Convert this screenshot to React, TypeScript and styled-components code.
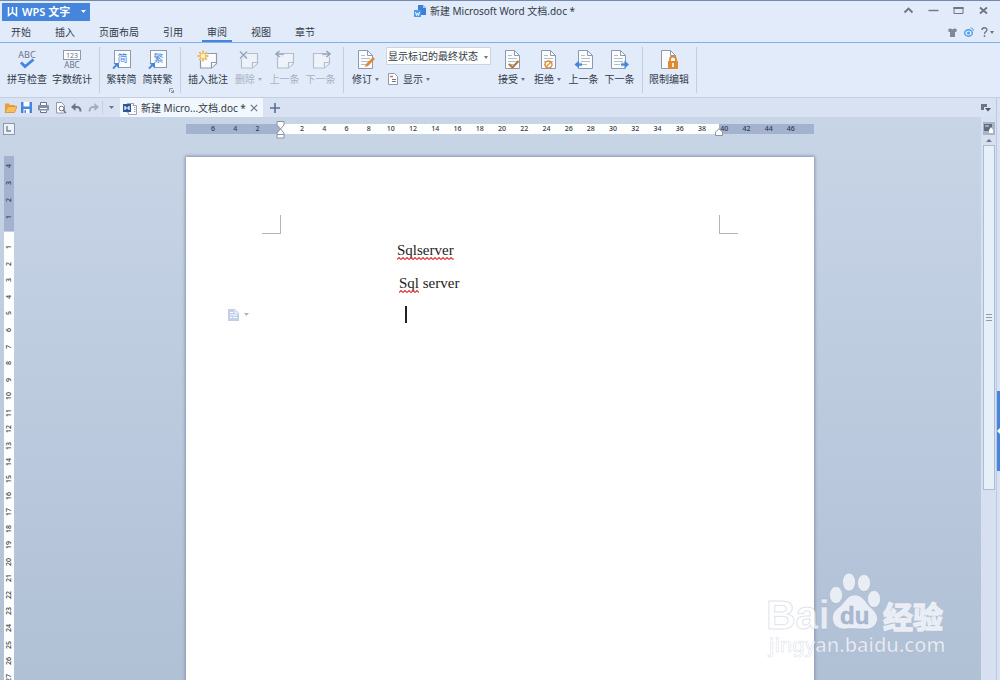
import React from 'react';
import styled, { createGlobalStyle, css } from 'styled-components';

const c = {
  text: '#333a48',
  muted: '#a8b1c1',
  icon: '#6b7488',
  iconSoft: '#8f99ad',
  blue: '#4586dc',
  orange: '#dd8a35',
  chrome: '#e1ebfa',
  bar: '#d8e2f2',
  line: '#c3cfe1',
  rulerDark: '#a3b3cf',
};

const GlobalStyle = createGlobalStyle`
  * { box-sizing: border-box; }
  body {
    margin: 0;
    color: ${c.text};
    font: 10px/12px "Noto Sans", "Noto Sans CJK SC", sans-serif;
  }
  button, select {
    margin: 0;
    padding: 0;
    border: 0;
    background: none;
    color: inherit;
    font: inherit;
  }
  svg { display: block; flex: none; }
`;

const Shell = styled.div`
  display: flex;
  flex-direction: column;
  height: 100vh;
  overflow: hidden;
  background: ${c.chrome};
  border-top: 1px solid #7589ae;
`;

/* ---------- title bar ---------- */

const TitleBar = styled.header`
  display: grid;
  grid-template-columns: 1fr auto 1fr;
  align-items: center;
  height: 21px;
  padding: 0 10px 0 2px;
`;

const AppButton = styled.button`
  display: flex;
  align-items: center;
  gap: 4px;
  justify-self: start;
  width: 88px;
  height: 18px;
  padding: 0 4px 0 5px;
  background: ${c.blue};
  color: #fff;
  font-size: 11px;
  font-weight: 600;
  line-height: 18px;
  svg:last-child { margin-left: auto; }
`;

const DocTitle = styled.h1`
  display: flex;
  align-items: center;
  gap: 4px;
  margin: 0;
  padding: 0 3px 2px 0;
  font-size: 10px;
  font-weight: 400;
`;

const WindowButtons = styled.div`
  display: flex;
  justify-content: flex-end;
  gap: 12px;
  padding-bottom: 2px;
`;

const IconButton = styled.button`
  display: flex;
  align-items: center;
  justify-content: center;
  gap: 2px;
`;

/* ---------- menu ---------- */

const MenuBar = styled.nav`
  display: flex;
  justify-content: space-between;
  height: 21px;
  padding: 0 6px;
  border-bottom: 1px solid #7fb0ea;
`;

const MenuTabs = styled.div`
  display: flex;
  gap: 14px;
`;

const MenuTab = styled.button<{ $active?: boolean }>`
  padding: 2px 5px 0;
  border-bottom: 2px solid ${(p) => (p.$active ? c.blue : 'transparent')};
`;

const MenuTools = styled.div`
  display: flex;
  align-items: center;
  gap: 7px;
`;

/* ---------- ribbon ---------- */

const Ribbon = styled.div`
  display: flex;
  flex: none;
  height: 55px;
  padding: 4px 1px;
  border-bottom: 1px solid ${c.line};
`;

const Group = styled.div<{ $start?: number }>`
  position: relative;
  display: flex;
  gap: 5px;
  padding: 0 7px 0 ${(p) => p.$start ?? 6}px;
  border-right: 1px solid ${c.line};
`;

const Tool = styled.button<{ $wide?: boolean }>`
  display: flex;
  flex-direction: column;
  align-items: center;
  gap: 3px;
  width: ${(p) => (p.$wide ? 40 : 31)}px;
  padding-top: 3px;
  white-space: nowrap;
  &:disabled { color: ${c.muted}; }
`;

const ToolLabel = styled.span`
  display: flex;
  align-items: center;
  gap: 3px;
`;

const Stack = styled.div`
  display: flex;
  flex-direction: column;
  align-items: flex-start;
  gap: 8px;
`;

const Combo = styled.label`
  position: relative;
  display: block;
  width: 105px;
  height: 18px;
  border: 1px solid #ccd4de;
  background: #fdfefe;
  svg {
    position: absolute;
    right: 2px;
    top: 8px;
    pointer-events: none;
  }
`;

const ComboSelect = styled.select`
  display: block;
  appearance: none;
  width: 100%;
  height: 100%;
  padding: 0 1px 1px;
  line-height: 14px;
`;

const InlineTool = styled.button`
  display: flex;
  align-items: center;
  gap: 5px;
  padding-left: 2px;
`;

const Launcher = styled.button`
  position: absolute;
  right: 6px;
  bottom: 0;
`;

/* ---------- document tabs ---------- */

const Lower = styled.div`
  display: flex;
  flex: 1;
  min-height: 0;
`;

const Main = styled.div`
  display: flex;
  flex: 1;
  flex-direction: column;
  min-width: 0;
`;

const TabBar = styled.div`
  display: flex;
  flex: none;
  align-items: center;
  height: 19px;
  padding-left: 2px;
  background: ${c.bar};
`;

const QuickTools = styled.div`
  display: grid;
  grid-template-columns: repeat(6, 1fr);
  width: 101px;
  border-right: 1px solid ${c.line};
`;

const MoreButton = styled(IconButton)`
  width: 17px;
`;

const DocTab = styled.div`
  display: flex;
  align-items: center;
  gap: 4px;
  height: 100%;
  width: 143px;
  padding: 1px 5px 0 3px;
  background: #f1f7fc;
  white-space: nowrap;
  span { flex: 1; }
`;

const TabEnd = styled.div`
  display: flex;
  flex: 1;
  justify-content: space-between;
  padding: 0 5px 0 7px;
`;

/* ---------- workspace ---------- */

const Workspace = styled.div`
  display: flex;
  flex: 1;
  min-height: 0;
  background: linear-gradient(#c8d5e7, #b0c0d5);
`;

const Canvas = styled.main`
  display: grid;
  flex: 1;
  grid-template-columns: 19px 1fr;
  grid-template-rows: 39px 1fr;
  min-width: 0;
  overflow: hidden;
`;

const TabStop = styled.button`
  display: grid;
  place-items: center;
  width: 12px;
  height: 12px;
  margin: 6px 0 0 3px;
  border: 1px solid #8d99ae;
  background: #eef2f7;
`;

const Ruler = styled.div`
  position: relative;
  display: grid;
  grid-template-columns: repeat(27, 1fr);
  justify-self: center;
  width: 628px;
  height: 10px;
  margin-top: 7px;
  padding: 0 12px 0 16px;
  background: linear-gradient(
    90deg,
    ${c.rulerDark} 94px,
    #fdfefe 94px calc(100% - 95px),
    ${c.rulerDark} calc(100% - 95px)
  );
  font-size: 7px;
  font-weight: 500;
  line-height: 10px;
  text-align: center;
`;

const Marker = styled.svg<{ $at: number; $top: number }>`
  position: absolute;
  left: ${(p) => p.$at}px;
  top: ${(p) => p.$top}px;
`;

const SideRuler = styled.div`
  width: 10px;
  margin-left: 4px;
  font-size: 7px;
  font-weight: 500;
  line-height: 10px;
`;

const SideScale = styled.div<{ $dark?: boolean }>`
  display: grid;
  grid-auto-rows: 1fr;
  place-items: center;
  ${(p) =>
    p.$dark
      ? css`
          height: 75px;
          padding: 2px 0 6px;
          margin-bottom: 1px;
          background: ${c.rulerDark};
        `
      : css`
          height: 454px;
          padding-top: 7px;
          background: #fdfefe;
        `}
`;

const SideNumber = styled.span`
  writing-mode: vertical-rl;
  transform: rotate(180deg);
`;

const Page = styled.article`
  justify-self: center;
  width: 628px;
  min-height: 888px;
  margin-top: 1px;
  padding-top: 58px;
  background: #fff;
  box-shadow: 0 0 3px 1px #8794ab;
  color: #1c1c1c;
  font: 15px/33px "Liberation Serif", "Noto Sans CJK SC", serif;
`;

const CropMarks = styled.div`
  display: flex;
  justify-content: space-between;
  padding: 0 76px;
`;

const Crop = styled.i<{ $side: 'left' | 'right' }>`
  width: 19px;
  height: 19px;
  border-bottom: 1px solid #b5b5b5;
  border-${(p) => (p.$side === 'left' ? 'right' : 'left')}: 1px solid #b5b5b5;
`;

const Line = styled.p<{ $indent: number }>`
  display: flex;
  align-items: center;
  height: 33px;
  margin: 0;
  padding-left: ${(p) => p.$indent}px;
  white-space: pre;
`;

const CaretLine = styled.div`
  display: flex;
  align-items: center;
  height: 29px;
  padding-left: 42px;
`;

const Misspelt = styled.span`
  position: relative;
  svg {
    position: absolute;
    left: 0;
    bottom: 7px;
    width: 100%;
    height: 3px;
  }
`;

const PasteOptions = styled(IconButton)`
  gap: 5px;
  width: 21px;
`;

const Caret = styled.i`
  width: 2px;
  height: 17px;
  margin-left: 156px;
  background: #222;
`;

/* ---------- scroll bar and edge ---------- */

const ScrollBar = styled.aside`
  display: flex;
  flex-direction: column;
  align-items: center;
  width: 15px;
  padding-top: 5px;
  background: #d6e0f1;
`;

const Browse = styled.button`
  display: grid;
  place-items: center;
  width: 12px;
  height: 13px;
  background: #a9b4c7;
`;

const ScrollUp = styled.button`
  display: grid;
  place-items: center;
  width: 12px;
  height: 10px;
`;

const Thumb = styled.div`
  display: grid;
  place-items: center;
  width: 12px;
  height: 345px;
  border: 1px solid #aebbd0;
  background: #e6f0f8;
`;

const Edge = styled.aside`
  width: 4px;
  padding-top: 293px;
  border-left: 1px solid #bccae0;
  background: ${c.bar};
`;

const EdgeHandle = styled.button`
  display: grid;
  place-items: center;
  width: 3px;
  height: 80px;
  background: ${c.blue};
`;

const Watermark = styled.svg`
  position: absolute;
  right: 48px;
  bottom: 20px;
  pointer-events: none;
`;

/* ---------- icons ---------- */

const Down = ({ color = c.icon, size = 5 }: { color?: string; size?: number }) => (
  <svg width={size} height="3" viewBox="0 0 6 3" preserveAspectRatio="none"><path d="M0 0h6L3 3z" fill={color} /></svg>
);

const Big = ({ children }: { children: React.ReactNode }) => (
  <svg width="22" height="20" viewBox="0 0 22 20" fill="none" overflow="visible" aria-hidden="true">{children}</svg>
);

const glyph = { fontFamily: '"Noto Sans","Noto Sans CJK SC",sans-serif', textAnchor: 'middle' as const };

const SpellIcon = () => (
  <Big>
    <text x="11" y="8" fontSize="9" fill={c.icon} {...glyph}>ABC</text>
    <path d="M5 12.500l4 4L17.500 9.500" stroke={c.blue} strokeWidth="2.800" />
  </Big>
);
const CountIcon = () => (
  <Big>
    <rect x="2.5" y="0.5" width="17" height="9" fill="#fff" stroke={c.iconSoft} />
    <text x="11" y="8" fontSize="7" fill={c.icon} {...glyph}>123</text>
    <text x="11" y="18" fontSize="8" fill={c.icon} {...glyph}>ABC</text>
  </Big>
);
const ConvertIcon = ({ char }: { char: string }) => (
  <Big>
    <rect x="3.5" y="0.5" width="16" height="17" fill="#fafcff" stroke={c.iconSoft} />
    <text x="11.5" y="12" fontSize="10" fill={c.blue} {...glyph}>{char}</text>
    <path d="M1 13h6v7H1z" fill={c.chrome} />
    <path d="M2 18.500L6 14.500" stroke={c.blue} strokeWidth="1.800" />
    <path d="M2.500 13H8v5.500z" fill={c.blue} />
  </Big>
);
const NoteShape = ({ faded }: { faded?: boolean }) => (
  <g stroke={faded ? '#b4bdcc' : c.iconSoft} strokeWidth="1.2">
    <path d="M3.500 3.500h16v10l-5 4.500h-11z" fill={faded ? '#eef3fa' : '#fbfcfe'} />
    <path d="M19.500 12.500h-5V18" fill={faded ? '#eef3fa' : '#fff'} />
  </g>
);
const AddNoteIcon = () => (
  <Big>
    <NoteShape />
    <circle cx="6" cy="6" r="5" fill={c.chrome} />
    <path d="M6 .5v11M.5 6h11M2.200 2.200l7.600 7.600M9.800 2.200L2.200 9.800" stroke="#f2b02e" strokeWidth="1.400" />
    <circle cx="6" cy="6" r="2.200" fill="#fff3c4" />
  </Big>
);
const DeleteNoteIcon = () => (
  <Big>
    <NoteShape faded />
    <path d="M1 1h8v8H1z" fill={c.chrome} />
    <path d="M2 1.500l7 7M9 1.500l-7 7" stroke="#98a3b6" strokeWidth="1.400" />
  </Big>
);
const StepNoteIcon = ({ next }: { next?: boolean }) => (
  <Big>
    <NoteShape faded />
    <path d={next ? 'M12 1h9v6h-9z' : 'M1 1h9v6H1z'} fill={c.chrome} />
    {next ? (
      <path d="M12 4h7M16.500 1L20 4l-3.500 3" stroke="#98a3b6" strokeWidth="1.600" />
    ) : (
      <path d="M10 4H3M5.500 1L2 4l3.500 3" stroke="#98a3b6" strokeWidth="1.600" />
    )}
  </Big>
);
const Sheet = ({ x = 4 }: { x?: number }) => (
  <g transform={`translate(${x} 0)`} stroke={c.iconSoft}>
    <path d="M.5.5h9l5 5v13H.5z" fill="#fbfcfe" />
    <path d="M9.500.5v5h5" />
  </g>
);
const SheetLines = ({ x = 4 }: { x?: number }) => (
  <path transform={`translate(${x} 0)`} d="M3 5.500h4M3 8.500h9M3 11.500h9M3 14.500h6" stroke="#b5bdcb" />
);
const ReviseIcon = () => (
  <Big>
    <Sheet x={3} /><SheetLines x={3} />
    <path d="M10 17l1-3 7-7 2 2-7 7z" fill={c.orange} />
  </Big>
);
const AcceptIcon = () => (
  <Big><Sheet /><SheetLines /><path d="M8 14l3.500 3.500L17.500 11" stroke="#b4783a" strokeWidth="2" /></Big>
);
const RejectIcon = () => (
  <Big>
    <Sheet /><SheetLines />
    <circle cx="11.500" cy="14.500" r="3.500" fill="#fff" stroke={c.orange} strokeWidth="1.400" />
    <path d="M9 17l5-5" stroke={c.orange} strokeWidth="1.200" />
  </Big>
);
const StepIcon = ({ next }: { next?: boolean }) => (
  <Big>
    <Sheet x={next ? 2 : 5} /><SheetLines x={next ? 2 : 5} />
    {next ? (
      <>
        <path d="M12 12h8v5h-8z" fill={c.chrome} />
        <path d="M12 14.500h5" stroke={c.blue} strokeWidth="2.200" />
        <path d="M15.500 10.500l4.500 4-4.500 4z" fill={c.blue} />
      </>
    ) : (
      <>
        <path d="M2 12h7v5H2z" fill={c.chrome} />
        <path d="M9 14.500H4" stroke={c.blue} strokeWidth="2.200" />
        <path d="M6 10.500l-4.500 4 4.500 4z" fill={c.blue} />
      </>
    )}
  </Big>
);
const LockIcon = () => (
  <Big>
    <Sheet x={3} />
    <path d="M12 11V9.500a3 3 0 0 1 6 0V11" stroke={c.orange} strokeWidth="1.800" />
    <rect x="10" y="11" width="10" height="8" fill={c.orange} />
    <path d="M15 13v4" stroke="#fff" strokeWidth="1.600" />
  </Big>
);

const Q = ({ children }: { children: React.ReactNode }) => (
  <svg width="13" height="13" viewBox="0 0 13 13" fill="none" aria-hidden="true">{children}</svg>
);

const WordIcon = () => (
  <svg width="14" height="13" viewBox="0 0 14 13" fill="none" aria-hidden="true">
    <rect x="4.500" y="1.500" width="6" height="9" fill="#fff" stroke="#9aa5b8" />
    <path d="M9.500 3.500h4v9h-8v-2" fill="#fff" stroke="#9aa5b8" />
    <path d="M11 5.500h1.500M11 7.500h1.500M11 9.500h1.500" stroke="#9aa5b8" />
    <rect y="2" width="8" height="8" fill="#2b579a" />
    <path d="M2 4v4M6 4v4M2 6h4" stroke="#fff" strokeWidth="1.200" />
  </svg>
);

const quick = [
  { label: '打开', art: <><path d="M1 11V2.500h4l1 1.500h5v2" fill="#e8a03a" /><path d="M1 11.500L3.500 5.500H13L10.500 11.500z" fill="#f6c062" stroke="#d98f2c" strokeWidth=".8" /></> },
  { label: '保存', art: <><path d="M1 1h11v11H1z" fill={c.blue} /><path d="M3.500 1h6v4.500h-6zM3.500 8h6v4h-6z" fill="#fff" /><path d="M4.500 9h1.500v3H4.500z" fill={c.blue} /></> },
  { label: '打印', art: <><path d="M3.500 4V1.500h6V4M3.500 9.500v2h6v-2" stroke={c.icon} fill="#fff" /><rect x="1" y="4" width="11" height="5.500" rx="1" fill="#858fa3" /><path d="M3 7.500h7" stroke="#fff" /></> },
  { label: '打印预览', art: <><path d="M2.500 1.500h5l3 3v7.500h-8z" fill="#fff" stroke={c.iconSoft} /><circle cx="7.500" cy="7.500" r="2.400" fill="#fff" stroke={c.icon} /><path d="M9.300 9.300L12 12" stroke={c.icon} strokeWidth="1.400" /></> },
  { label: '撤销', art: <><path d="M1 6l4.500-4v8z" fill={c.icon} /><path d="M5 6c4-.5 5.500 1 5.500 4.500" stroke={c.icon} strokeWidth="2" /></> },
  { label: '恢复', art: <><path d="M12 6L7.500 2v8z" fill="#a4adbd" /><path d="M8 6c-4-.5-5.500 1-5.500 4.500" stroke="#a4adbd" strokeWidth="2" /></> },
];

const ruler = [6, 4, 2, null, ...Array.from({ length: 23 }, (_, i) => (i + 1) * 2)];

const Wave = ({ id }: { id: string }) => (
  <svg aria-hidden="true">
    <pattern id={id} width="4" height="3" patternUnits="userSpaceOnUse">
      <path d="M0 2.500L2 .5l2 2" fill="none" stroke="#e83030" strokeWidth="1.100" />
    </pattern>
    <rect width="100%" height="3" fill={`url(#${id})`} />
  </svg>
);

export default function App() {
  return (
    <Shell>
      <GlobalStyle />
      <TitleBar>
        <AppButton>
          <svg width="11" height="11" viewBox="0 0 11 11" fill="none" aria-hidden="true">
            <path d="M1.500 1v8.500L5.500 6.500M5.500 1v5.500L9.500 9.500V1" stroke="#fff" strokeWidth="1.500" />
          </svg>
          WPS 文字
          <Down color="#fff" />
        </AppButton>
        <DocTitle>
          <svg width="12" height="12" viewBox="0 0 12 12" aria-hidden="true">
            <path d="M4 0h5l3 3v7H4z" fill="#3f7fd8" />
            <path d="M9 0v3h3z" fill="#a8cbf5" />
            <rect y="5" width="7" height="7" fill="#4e9bec" />
            <path d="M1.500 7l1 3.500L3.500 8l1 2.500 1-3.500" stroke="#fff" fill="none" strokeWidth=".9" />
          </svg>
          新建 Microsoft Word 文档.doc *
        </DocTitle>
        <WindowButtons>
          <IconButton aria-label="折叠功能区"><Q><path d="M2.500 8.500l4-4 4 4" stroke={c.icon} strokeWidth="1.800" /></Q></IconButton>
          <IconButton aria-label="最小化"><Q><path d="M1.500 6.500h10" stroke={c.icon} strokeWidth="1.400" /></Q></IconButton>
          <IconButton aria-label="最大化"><Q><path d="M2 3.500h9v6H2z" stroke={c.icon} /><path d="M1.500 4h10" stroke={c.icon} strokeWidth="2" /></Q></IconButton>
          <IconButton aria-label="关闭"><Q><path d="M3 3.500l7 6M10 3.500l-7 6" stroke={c.icon} strokeWidth="1.800" /></Q></IconButton>
        </WindowButtons>
      </TitleBar>

      <MenuBar>
        <MenuTabs>
          {['开始', '插入', '页面布局', '引用', '审阅', '视图', '章节'].map((name) => (
            <MenuTab key={name} $active={name === '审阅'}>{name}</MenuTab>
          ))}
        </MenuTabs>
        <MenuTools>
          <IconButton aria-label="皮肤">
            <svg width="9" height="9" viewBox="0 0 9 9"><path d="M0 1.500L2.500.3Q4.500 2 6.500.3L9 1.500 8.200 4H7v5H2V4H.8z" fill="#80899c" /></svg>
          </IconButton>
          <IconButton aria-label="微博">
            <svg width="10" height="10" viewBox="0 0 10 10" fill="none">
              <ellipse cx="4.500" cy="6" rx="3.800" ry="3.200" stroke="#4b9be8" strokeWidth="1.400" />
              <circle cx="4.500" cy="6" r="1.500" fill="#4b9be8" />
              <path d="M6.500 1c2 0 3 1 2.800 2.800" stroke="#4b9be8" />
            </svg>
          </IconButton>
          <IconButton aria-label="帮助">
            <svg width="7" height="10" viewBox="0 0 7 10" fill="none">
              <path d="M1 3C1 0 6 0 6 2.800 6 4.500 3.500 4.500 3.500 7" stroke={c.icon} strokeWidth="1.400" />
              <circle cx="3.500" cy="9" r=".9" fill={c.icon} />
            </svg>
            <Down size={4} />
          </IconButton>
        </MenuTools>
      </MenuBar>

      <Ribbon>
        <Group>
          <Tool $wide><SpellIcon />拼写检查</Tool>
          <Tool $wide><CountIcon />字数统计</Tool>
        </Group>
        <Group>
          <Tool><ConvertIcon char="简" />繁转简</Tool>
          <Tool><ConvertIcon char="繁" />简转繁</Tool>
          <Launcher aria-label="中文简繁转换设置">
            <svg width="5" height="5" viewBox="0 0 5 5" fill="none"><path d="M.5 4V.5H4M2 2l2.500 2.500M4.500 2v2.500H2" stroke="#8b95a8" /></svg>
          </Launcher>
        </Group>
        <Group $start={7}>
          <Tool $wide><AddNoteIcon />插入批注</Tool>
          <Tool disabled><DeleteNoteIcon /><ToolLabel>删除<Down color={c.muted} size={4} /></ToolLabel></Tool>
          <Tool disabled><StepNoteIcon />上一条</Tool>
          <Tool disabled><StepNoteIcon next />下一条</Tool>
        </Group>
        <Group>
          <Tool><ReviseIcon /><ToolLabel>修订<Down size={4} /></ToolLabel></Tool>
          <Stack>
            <Combo aria-label="显示状态">
              <ComboSelect defaultValue="final">
                <option value="final">显示标记的最终状态</option>
                <option value="final-clean">最终状态</option>
              </ComboSelect>
              <Down size={4} />
            </Combo>
            <InlineTool>
              <svg width="10" height="12" viewBox="0 0 10 12" fill="none" aria-hidden="true">
                <path d="M.5.5h6l3 3v8h-9z" fill="#fff" stroke={c.iconSoft} />
                <path d="M2 3.500h3" stroke="#e06650" strokeWidth="1.400" />
                <path d="M4 6.500h4M4 8.500h4" stroke={c.icon} />
              </svg>
              <ToolLabel>显示<Down size={4} /></ToolLabel>
            </InlineTool>
          </Stack>
          <Tool><AcceptIcon /><ToolLabel>接受<Down size={4} /></ToolLabel></Tool>
          <Tool><RejectIcon /><ToolLabel>拒绝<Down size={4} /></ToolLabel></Tool>
          <Tool><StepIcon />上一条</Tool>
          <Tool><StepIcon next />下一条</Tool>
        </Group>
        <Group>
          <Tool $wide><LockIcon />限制编辑</Tool>
        </Group>
      </Ribbon>

      <Lower>
        <Main>
          <TabBar>
            <QuickTools>
              {quick.map((q) => (
                <IconButton key={q.label} aria-label={q.label}><Q>{q.art}</Q></IconButton>
              ))}
            </QuickTools>
            <MoreButton aria-label="自定义快速访问"><Down /></MoreButton>
            <DocTab>
              <WordIcon />
              <span>新建 Micro...文档.doc *</span>
              <IconButton aria-label="关闭文档">
                <svg width="8" height="8" viewBox="0 0 8 8"><path d="M.8.8l6.400 6.400M7.200.8L.8 7.200" stroke={c.icon} strokeWidth="1.200" /></svg>
              </IconButton>
            </DocTab>
            <TabEnd>
              <IconButton aria-label="新建文档">
                <svg width="10" height="10" viewBox="0 0 10 10"><path d="M5 0v10M0 5h10" stroke="#5b6f95" strokeWidth="1.600" /></svg>
              </IconButton>
              <IconButton aria-label="文档列表">
                <svg width="11" height="9" viewBox="0 0 11 9"><path d="M1 1h6v3H4v3H1z" fill={c.icon} /><path d="M5 5h6L8 8.500z" fill="#4d566a" /></svg>
              </IconButton>
            </TabEnd>
          </TabBar>

          <Workspace>
            <Canvas>
              <TabStop aria-label="制表位">
                <svg width="6" height="6" viewBox="0 0 6 6" fill="none"><path d="M1 0v5h4" stroke="#7d879a" strokeWidth="1.400" /></svg>
              </TabStop>
              <Ruler>
                {ruler.map((n, i) => <span key={i}>{n}</span>)}
                <Marker $at={90} $top={-3} width="9" height="18" viewBox="0 0 9 18" fill="#fff" stroke="#8892a5">
                  <path d="M1 .5h7V4L4.500 8 1 4z" />
                  <path d="M4.500 8L8 12v5H1v-5zM1 13.500h7" />
                </Marker>
                <Marker $at={529} $top={4} width="8" height="9" viewBox="0 0 8 9" fill="#fff" stroke="#8892a5">
                  <path d="M4 .8L7.500 4v3.500h-7V4z" />
                </Marker>
              </Ruler>
              <SideRuler>
                <SideScale $dark>
                  {[4, 3, 2, 1].map((n) => <SideNumber key={n}>{n}</SideNumber>)}
                </SideScale>
                <SideScale>
                  {Array.from({ length: 27 }, (_, i) => <SideNumber key={i}>{i + 1}</SideNumber>)}
                </SideScale>
              </SideRuler>
              <Page>
                <CropMarks><Crop $side="left" /><Crop $side="right" /></CropMarks>
                <Line $indent={211}><Misspelt>Sqlserver<Wave id="wave-a" /></Misspelt></Line>
                <Line $indent={213}><Misspelt>Sql<Wave id="wave-b" /></Misspelt> server</Line>
                <CaretLine>
                  <PasteOptions aria-label="段落选项">
                    <svg width="11" height="12" viewBox="0 0 11 12" fill="none">
                      <path d="M0 0h7l4 4v8H0z" fill="#c3d0e6" />
                      <path d="M2 3.500h3M2 6h7M2 8.500h2M5 8.500h4M7 1v3h3" stroke="#fff" />
                    </svg>
                    <Down size={5} color="#a9b8d2" />
                  </PasteOptions>
                  <Caret />
                </CaretLine>
              </Page>
            </Canvas>
            <ScrollBar>
              <Browse aria-label="选择浏览对象">
                <svg width="10" height="9" viewBox="0 0 10 9"><path d="M0 0h8v7H0z" fill="#5f6b80" /><path d="M2 1v2M4 1v2" stroke="#dfe6f0" /><path d="M5 9V6l2-3 2 3v3z" fill="#fff" /></svg>
              </Browse>
              <ScrollUp aria-label="向上滚动">
                <svg width="6" height="3" viewBox="0 0 6 3"><path d="M0 3h6L3 0z" fill={c.icon} /></svg>
              </ScrollUp>
              <Thumb>
                <svg width="6" height="8" viewBox="0 0 6 8"><path d="M0 .5h6M0 3.500h6M0 6.500h6" stroke="#8d99b0" /></svg>
              </Thumb>
            </ScrollBar>
          </Workspace>
        </Main>
        <Edge>
          <EdgeHandle aria-label="展开任务窗格">
            <svg width="3" height="6" viewBox="0 0 3 6"><path d="M3 0v6L0 3z" fill="#fff" /></svg>
          </EdgeHandle>
        </Edge>
      </Lower>

      <Watermark
        width="186" height="92" viewBox="0 0 186 92"
        fill="#eef1f7" fillOpacity=".92" stroke="#8e9dba" strokeOpacity=".3"
        fontFamily='"Liberation Sans","Noto Sans CJK SC",sans-serif' fontWeight="700"
      >
        <text x="0" y="61" fontSize="41" fill="#fff" fillOpacity=".7">Bai</text>
        <ellipse cx="70" cy="27" rx="6.500" ry="8.500" />
        <ellipse cx="83" cy="14" rx="6.500" ry="9" />
        <ellipse cx="98" cy="15" rx="6.500" ry="8.500" />
        <ellipse cx="108" cy="31" rx="6.500" ry="8.500" />
        <path d="M89 27c7 0 10 6 14 11 5 4 8.500 8 8.500 13-1 8-7 10-12 10-7 0-14-1-21 0-7 0-12-4-12-11 0-6 4-9 8-12 5-5 7-11 14.500-11z" />
        <text x="74" y="56" fontSize="24" fill="#aab9d0" fillOpacity="1">du</text>
        <text x="117" y="60" fontSize="30" stroke="#eef1f7" strokeOpacity=".9" strokeWidth="1.500" fontFamily='"Noto Sans CJK SC",sans-serif'>经验</text>
        <text x="3" y="84" fontSize="20" fontWeight="500" strokeWidth=".7" fill="#fff" fillOpacity=".72" fontFamily='"Noto Sans",sans-serif'>jingyan.baidu.com</text>
      </Watermark>
    </Shell>
  );
}
